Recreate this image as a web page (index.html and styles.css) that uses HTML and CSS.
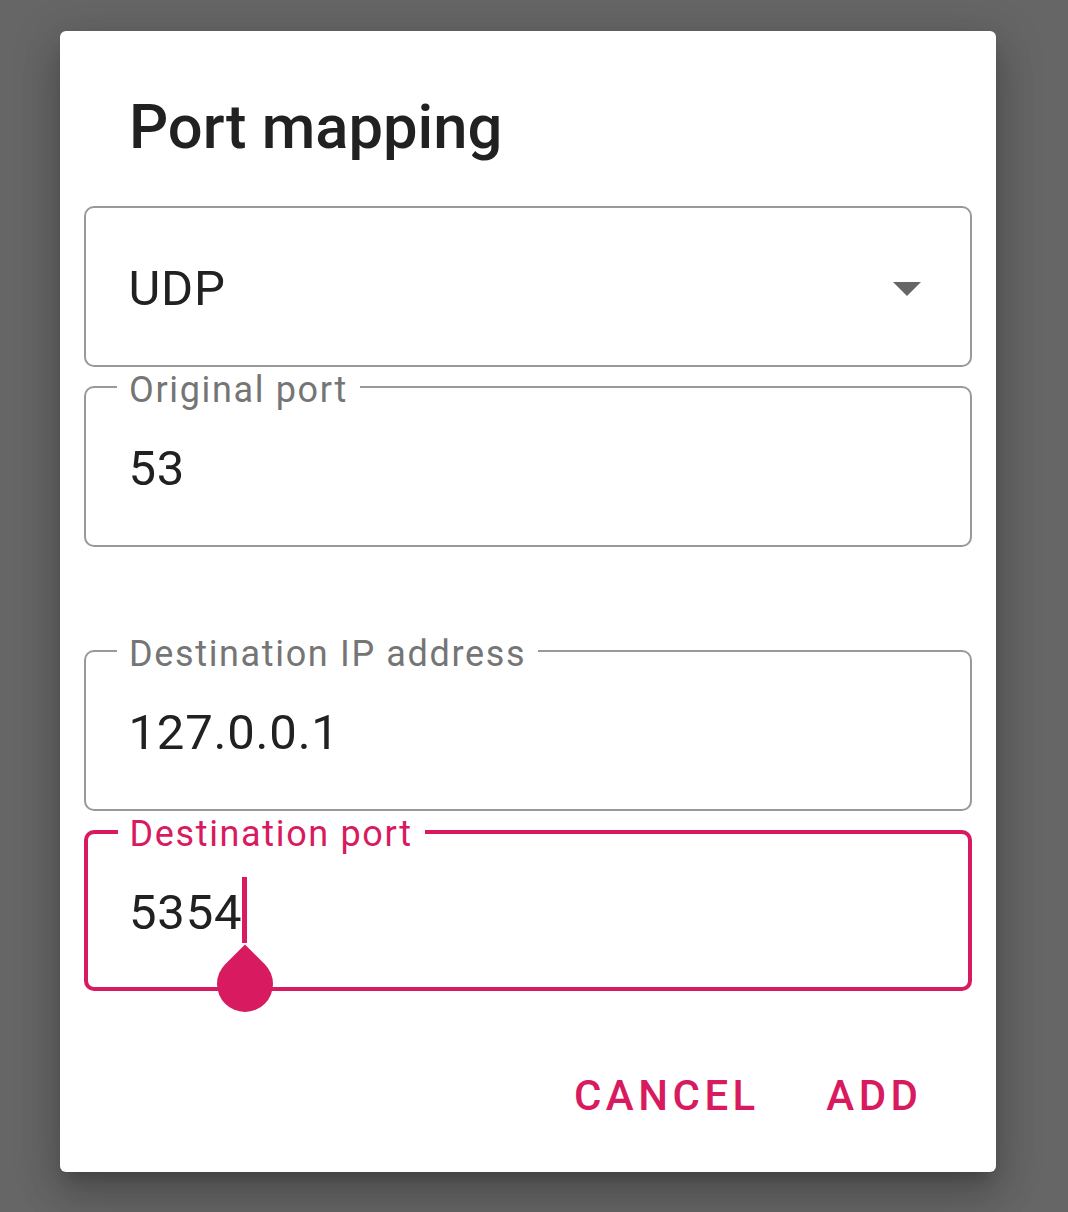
FILE: index.html
```html
<!DOCTYPE html>
<html>
<head>
<meta charset="utf-8">
<link rel="stylesheet" href="styles.css">
</head>
<body>
<div class="dialog">
  <h1 class="title">Port mapping</h1>
  <div class="fields">
    <div class="field select">
      <span class="value">UDP</span>
      <span class="arrow"></span>
    </div>
    <div class="field">
      <span class="label">Original port</span>
      <span class="value">53</span>
    </div>
    <div class="field spaced">
      <span class="label">Destination IP address</span>
      <span class="value">127.0.0.1</span>
    </div>
    <div class="field focused">
      <span class="label">Destination port</span>
      <span class="value">5354</span><span class="cursor"><span class="handle"></span></span>
    </div>
  </div>
  <div class="actions">
    <span class="btn">CANCEL</span>
    <span class="btn">ADD</span>
  </div>
</div>
</body>
</html>
```
FILE: styles.css
```css
html, body {
  margin: 0;
  padding: 0;
  background: #666666;
  font-family: Roboto, "Noto Sans", sans-serif;
}
body {
  padding: 31px 0 0 60px;
  height: 1212px;
  box-sizing: border-box;
}
.dialog {
  width: 936px;
  height: 1141px;
  background: #ffffff;
  border-radius: 6px;
  box-shadow: 0 24px 38px 3px rgba(0,0,0,0.14), 0 9px 46px 8px rgba(0,0,0,0.12), 0 11px 15px -7px rgba(0,0,0,0.2);
  box-sizing: border-box;
  padding: 0 24px;
  display: flex;
  flex-direction: column;
}
.title {
  margin: 0;
  padding: 60px 0 0 45px;
  font-size: 61.5px;
  font-weight: 500;
  line-height: 72px;
  color: #212121;
  height: 175px;
  box-sizing: border-box;
}
.fields {
  display: flex;
  flex-direction: column;
  gap: 19px;
}
.field {
  position: relative;
  height: 161px;
  box-sizing: border-box;
  border: 2.5px solid #999999;
  border-radius: 10px;
  display: flex;
  align-items: center;
  padding-left: 42.5px;
  padding-top: 4px;
  color: #212121;
  font-size: 49px;
  line-height: 58px;
}
.field.spaced {
  margin-top: 84px;
}
.select {
  justify-content: space-between;
  padding-right: 49.5px;
}
.arrow {
  width: 0;
  height: 0;
  border-left: 14px solid transparent;
  border-right: 14px solid transparent;
  border-top: 14px solid #666666;
}
.label {
  position: absolute;
  top: -16px;
  left: 31px;
  padding: 0 12px;
  background: #ffffff;
  font-size: 36px;
  line-height: 36px;
  letter-spacing: 1.65px;
  color: #757575;
}
.value {
  letter-spacing: 0.8px;
}
.focused {
  border: 4px solid #d81b60;
  padding-left: 41px;
}
.focused .label {
  color: #d81b60;
  left: 29.5px;
  top: -18.5px;
}
.cursor {
  position: relative;
  display: inline-block;
  width: 5px;
  height: 66px;
  background: #d81b60;
  margin-left: 0;
  margin-top: -5px;
}
.handle {
  position: absolute;
  width: 56px;
  height: 56px;
  left: -25.5px;
  top: 79px;
  background: #d81b60;
  border-radius: 0 50% 50% 50%;
  transform: rotate(45deg);
}
.actions {
  display: flex;
  justify-content: flex-end;
  gap: 66.5px;
  padding: 81px 49.5px 0 0;
}
.btn {
  color: #d81b60;
  font-size: 42px;
  font-weight: 500;
  letter-spacing: 4.5px;
  line-height: 48px;
}
```
